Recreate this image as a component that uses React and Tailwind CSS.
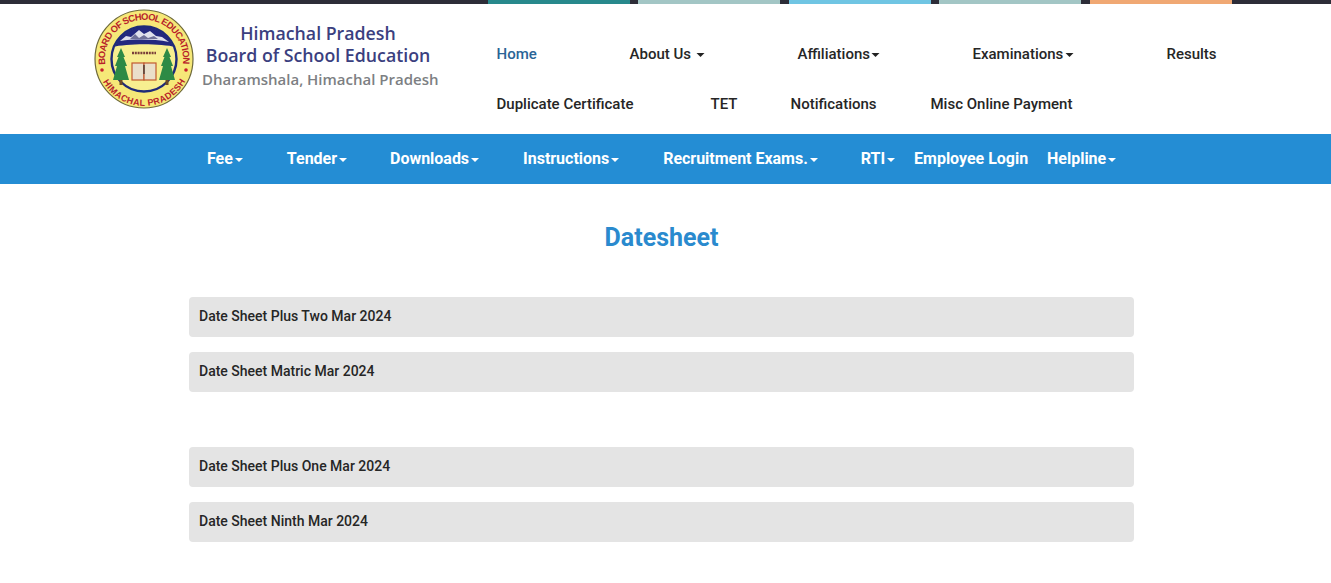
import React from 'react';

const stripes = [
    { color: 'bg-[#27898c]', ml: 'ml-[488px]' },
    { color: 'bg-[#a3c6c5]', ml: 'ml-2' },
    { color: 'bg-[#6fc5e3]', ml: 'ml-[9px]' },
    { color: 'bg-[#a3c6c5]', ml: 'ml-2' },
    { color: 'bg-[#f0a873]', ml: 'ml-[9px]' }
];

const topRow = [
    { label: 'Home', active: true, w: 'w-[133px]' },
    { label: 'About Us', caret: true, gap: 'ml-[5px]', w: 'w-[168px]' },
    { label: 'Affiliations', caret: true, gap: 'ml-[1px]', w: 'w-[175px]' },
    { label: 'Examinations', caret: true, w: 'w-[194px]' },
    { label: 'Results', w: 'w-auto' }
];

const bottomRow = [
    { label: 'Duplicate Certificate', w: 'w-[214px]' },
    { label: 'TET', w: 'w-[80px]' },
    { label: 'Notifications', w: 'w-[140px]' },
    { label: 'Misc Online Payment', w: 'w-auto' }
];

const blueNav = [
    { label: 'Fee', caret: true, ml: 'ml-0' },
    { label: 'Tender', caret: true, ml: 'ml-[44px]' },
    { label: 'Downloads', caret: true, ml: 'ml-[43px]' },
    { label: 'Instructions', caret: true, ml: 'ml-[44px]' },
    { label: 'Recruitment Exams.', caret: true, gap: 'ml-[2px]', ml: 'ml-[44px]' },
    { label: 'RTI', caret: true, ml: 'ml-[43px]' },
    { label: 'Employee Login', ml: 'ml-[19px]' },
    { label: 'Helpline', caret: true, ml: 'ml-[19px]' }
];

const sheets = [
    { label: 'Date Sheet Plus Two Mar 2024', mt: 'mt-0' },
    { label: 'Date Sheet Matric Mar 2024', mt: 'mt-[15px]' },
    { label: 'Date Sheet Plus One Mar 2024', mt: 'mt-[55px]' },
    { label: 'Date Sheet Ninth Mar 2024', mt: 'mt-[15px]' }
];

function Caret({ className }) {
    return <span className={`inline-block w-0 h-0 border-x-4 border-x-transparent border-t-4 align-middle ${className}`} />;
}

function Tree({ x }) {
    return (
        <g transform={`translate(${x} 0)`}>
            <rect x="-1.5" y="70" width="3" height="6" fill="#6d4a24" />
            <path d="M 0 39 L 4 48 L 2.5 48 L 6 57 L 4 57 L 8 71 L -8 71 L -4 57 L -6 57 L -2.5 48 L -4 48 Z" fill="#2d8a45" />
        </g>
    );
}

function Logo() {
    return (
        <svg width="100" height="100" viewBox="0 0 100 100" className="shrink-0">
            <defs>
                <path id="arcTop" d="M 11.4 55.4 A 39 39 0 1 1 88.6 55.4" />
                <path id="arcBottom" d="M 8.5 72 A 47 47 0 0 0 91.5 72" />
                <clipPath id="inner">
                    <circle cx="50" cy="50" r="32" />
                </clipPath>
            </defs>
            <circle cx="50" cy="50" r="49" fill="#f6e878" stroke="#6f6a3a" strokeWidth="1.2" />
            <circle cx="50" cy="50" r="32" fill="#f7ee90" />
            <g clipPath="url(#inner)">
                <path d="M 15 15 H 85 V 39 C 70 34 30 34 15 39 Z" fill="#23287f" />
                <path d="M 26 32 L 32 27 L 37 28 L 45 21 L 50 25 L 56 22 L 62 27 L 68 28 L 75 33 C 60 30 40 30 26 32 Z" fill="#dfe0ec" />
                <path d="M 36 30 L 41 25 L 45 29 L 50 26 L 54 29 L 60 27 L 64 30 Z" fill="#6f7099" />
            </g>
            <circle cx="50" cy="50" r="32.5" fill="none" stroke="#1e2a78" strokeWidth="2.4" />
            <Tree x="27" />
            <Tree x="73" />
            <path d="M 38 44 H 62" stroke="#7a3f3a" strokeWidth="2.4" strokeDasharray="2 0.8" />
            <rect x="38" y="54" width="12" height="17" fill="#eadfca" stroke="#c05a30" strokeWidth="1.2" />
            <rect x="50" y="54" width="12" height="17" fill="#eadfca" stroke="#c05a30" strokeWidth="1.2" />
            <rect x="49.4" y="56" width="1.2" height="9" fill="#333" />
            <circle cx="8" cy="61" r="1.8" fill="#c8202c" />
            <circle cx="92" cy="61" r="1.8" fill="#c8202c" />
            <text fontFamily="'Liberation Sans', sans-serif" fontSize="9.4" fontWeight="700" fill="#b81f2a">
                <textPath href="#arcTop" textLength="133" lengthAdjust="spacing">BOARD OF SCHOOL EDUCATION</textPath>
            </text>
            <text fontFamily="'Liberation Sans', sans-serif" fontSize="9" fontWeight="700" fill="#b81f2a">
                <textPath href="#arcBottom" startOffset="1" textLength="100" lengthAdjust="spacing">HIMACHAL PRADESH</textPath>
            </text>
        </svg>
    );
}

function App() {
    return (
        <div className="min-h-[583px] bg-white font-['Roboto',sans-serif] text-[#262626]">
            {/* top strip */}
            <div className="flex h-1 bg-[#2d2d38]">
                {stripes.map((s, i) => (
                    <div key={i} className={`h-1 w-[142px] ${s.color} ${s.ml}`} />
                ))}
            </div>

            {/* logo and main nav */}
            <div className="flex h-[130px] bg-white">
                <div className="ml-[94px] mt-[5px]">
                    <Logo />
                </div>
                <div className="ml-1 w-[240px] mt-[18px] text-center whitespace-nowrap font-['Open_Sans',sans-serif] font-semibold">
                    <div className="text-[17.75px] leading-[22px] text-[#3b3f7f]">Himachal Pradesh</div>
                    <div className="text-[17.75px] leading-[23px] text-[#3b3f7f]">Board of School Education</div>
                    <div className="pl-1 text-[15px] leading-[24px] text-[#7d7f83]">Dharamshala, Himachal Pradesh</div>
                </div>
                <div className="ml-[59px] -translate-x-[0.5px] text-[15px] font-medium">
                    <div className="flex h-[50px] mt-[25px] items-center">
                        {topRow.map((item) => (
                            <div key={item.label} className={`${item.w} ${item.active ? 'text-[#2a6496]' : ''}`}>
                                {item.label}
                                {item.caret && <Caret className={`border-t-[#222] ${item.gap || 'ml-[2px]'}`} />}
                            </div>
                        ))}
                    </div>
                    <div className="flex h-[50px] items-center">
                        {bottomRow.map((item) => (
                            <div key={item.label} className={item.w}>{item.label}</div>
                        ))}
                    </div>
                </div>
            </div>

            {/* blue nav */}
            <div className="flex h-[50px] items-center bg-[#248dd4] pl-[207px] text-[16px] font-bold tracking-[-0.02px] text-white">
                {blueNav.map((item) => (
                    <div key={item.label} className={item.ml}>
                        {item.label}
                        {item.caret && <Caret className={`border-t-white ${item.gap || 'ml-[2px]'}`} />}
                    </div>
                ))}
            </div>

            {/* content */}
            <div className="mx-auto w-[945px] -translate-x-[4px]">
                <h1 className="mt-[37px] text-center text-[25px] leading-[33px] font-bold text-[#2a8ace]">Datesheet</h1>
                <div className="mt-[43px] text-[14px] font-medium">
                    {sheets.map((sheet) => (
                        <div key={sheet.label} className={`flex h-10 items-center rounded bg-[#e4e4e4] px-[10px] pb-[2px] ${sheet.mt}`}>
                            {sheet.label}
                        </div>
                    ))}
                </div>
            </div>
        </div>
    );
}

export default App;
